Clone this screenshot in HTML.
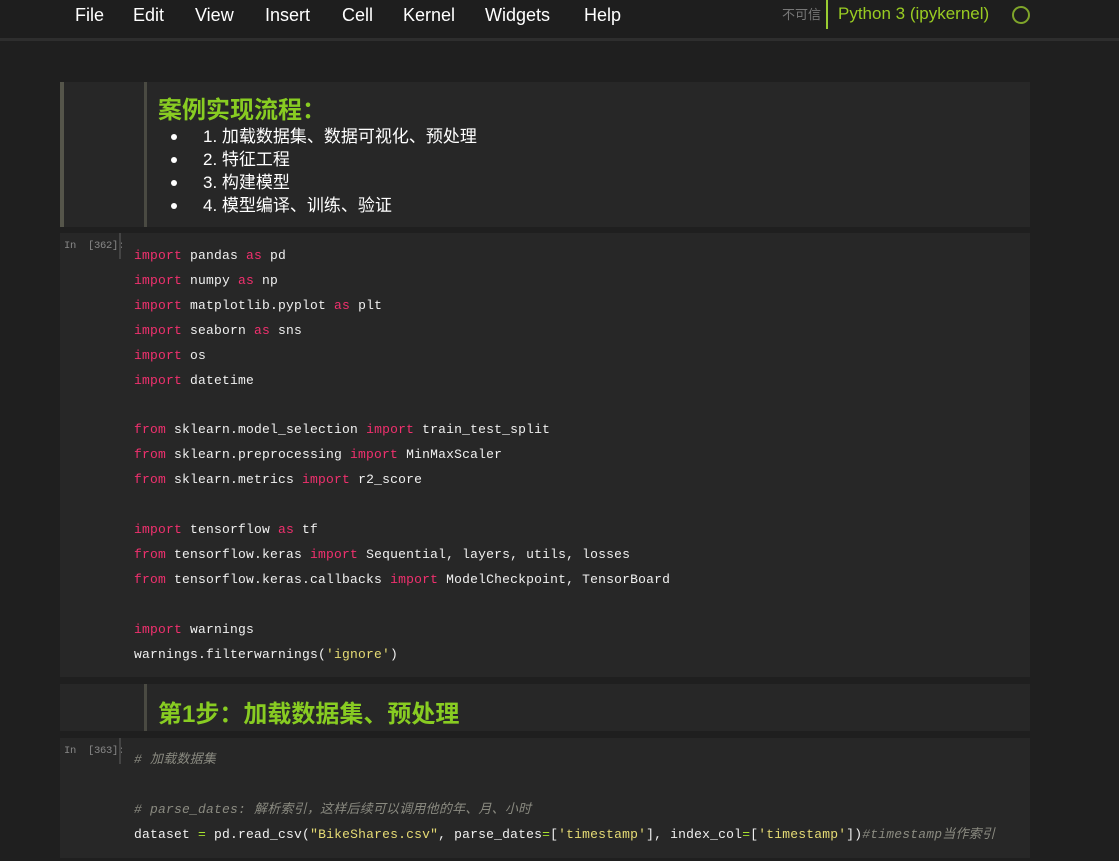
<!DOCTYPE html>
<html><head><meta charset="utf-8"><style>
body{margin:0;width:1119px;height:861px;overflow:hidden;background:#1f1f1f;font-family:"Liberation Sans","Noto Sans CJK SC",sans-serif;position:relative}
.top{position:absolute;left:0;top:0;width:1119px;height:38px;background:#1e1e1e;border-bottom:3px solid #2e2e2e}
.menu{position:absolute;top:5px;color:#fff;font-size:18px}
.cell{position:absolute;left:60px;width:970px;background:#272727}
.md{border-left:4px solid #55554a}
.md .bar{position:absolute;left:80px;top:0;bottom:0;width:3px;background:#4a4a42}
h1,h2{margin:0;color:#88cc22;font-weight:bold;position:absolute;left:94px}
ul{position:absolute;left:96px;top:43px;margin:0;padding:0;list-style:none;color:#fff;font-size:17px}
ul li{height:23px;line-height:23px;position:relative;padding-left:43px}
ul li:before{content:"";position:absolute;left:11px;top:9px;width:6px;height:6px;border-radius:3px;background:#fff}
.prompt{position:absolute;left:4px;top:7px;font-family:"Liberation Mono",monospace;font-size:10.5px;color:#888;white-space:nowrap;letter-spacing:-0.3px}
.pbar{position:absolute;left:59px;top:0;width:2px;height:26px;background:#444}
pre{position:absolute;left:74px;margin:0;font-family:"Liberation Mono","Noto Sans CJK SC",monospace;font-size:13px;line-height:24.9px;color:#f0f0f0;letter-spacing:0.2px}
.k{color:#f0306e}.s{color:#e6db74}.c{color:#8a8a80;font-style:italic}.o{color:#a6e22e}
</style></head><body>
<div class="top">
<span class="menu" style="left:75px">File</span>
<span class="menu" style="left:133px">Edit</span>
<span class="menu" style="left:195px">View</span>
<span class="menu" style="left:265px">Insert</span>
<span class="menu" style="left:342px">Cell</span>
<span class="menu" style="left:403px">Kernel</span>
<span class="menu" style="left:485px">Widgets</span>
<span class="menu" style="left:584px">Help</span>
<span style="position:absolute;left:782px;top:4px;font-size:13px;color:#777">不可信</span>
<div style="position:absolute;left:826px;top:0;width:2px;height:29px;background:#9acd32"></div>
<span style="position:absolute;left:838px;top:4px;font-size:17px;color:#99cc22">Python 3 (ipykernel)</span>
<div style="position:absolute;left:1012px;top:6px;width:14px;height:14px;border:2px solid #7fa52a;border-radius:50%"></div>
</div>

<div class="cell md" style="top:82px;height:145px;width:966px">
<div class="bar"></div>
<h1 style="top:8px;font-size:24px">案例实现流程：</h1>
<ul>
<li>1. 加载数据集、数据可视化、预处理</li>
<li>2. 特征工程</li>
<li>3. 构建模型</li>
<li>4. 模型编译、训练、验证</li>
</ul>
</div>

<div class="cell" style="top:233px;height:444px">
<span class="prompt">In &nbsp;[362]:</span><div class="pbar"></div>
<pre style="top:11px"><span class="k">import</span> pandas <span class="k">as</span> pd
<span class="k">import</span> numpy <span class="k">as</span> np
<span class="k">import</span> matplotlib.pyplot <span class="k">as</span> plt
<span class="k">import</span> seaborn <span class="k">as</span> sns
<span class="k">import</span> os
<span class="k">import</span> datetime

<span class="k">from</span> sklearn.model_selection <span class="k">import</span> train_test_split
<span class="k">from</span> sklearn.preprocessing <span class="k">import</span> MinMaxScaler
<span class="k">from</span> sklearn.metrics <span class="k">import</span> r2_score

<span class="k">import</span> tensorflow <span class="k">as</span> tf
<span class="k">from</span> tensorflow.keras <span class="k">import</span> Sequential, layers, utils, losses
<span class="k">from</span> tensorflow.keras.callbacks <span class="k">import</span> ModelCheckpoint, TensorBoard

<span class="k">import</span> warnings
warnings.filterwarnings(<span class="s">'ignore'</span>)</pre>
</div>

<div class="cell" style="top:684px;height:47px">
<div style="position:absolute;left:84px;top:0;bottom:0;width:3px;background:#4a4a42"></div>
<h2 style="top:10px;left:98px;font-size:24px">第1步：加载数据集、预处理</h2>
</div>

<div class="cell" style="top:738px;height:120px">
<span class="prompt">In &nbsp;[363]:</span><div class="pbar"></div>
<pre style="top:10px"><span class="c"># 加载数据集</span>

<span class="c"># parse_dates: 解析索引，这样后续可以调用他的年、月、小时</span>
dataset <span class="o">=</span> pd.read_csv(<span class="s">"BikeShares.csv"</span>, parse_dates<span class="o">=</span>[<span class="s">'timestamp'</span>], index_col<span class="o">=</span>[<span class="s">'timestamp'</span>])<span class="c">#timestamp当作索引</span></pre>
</div>
</body></html>
